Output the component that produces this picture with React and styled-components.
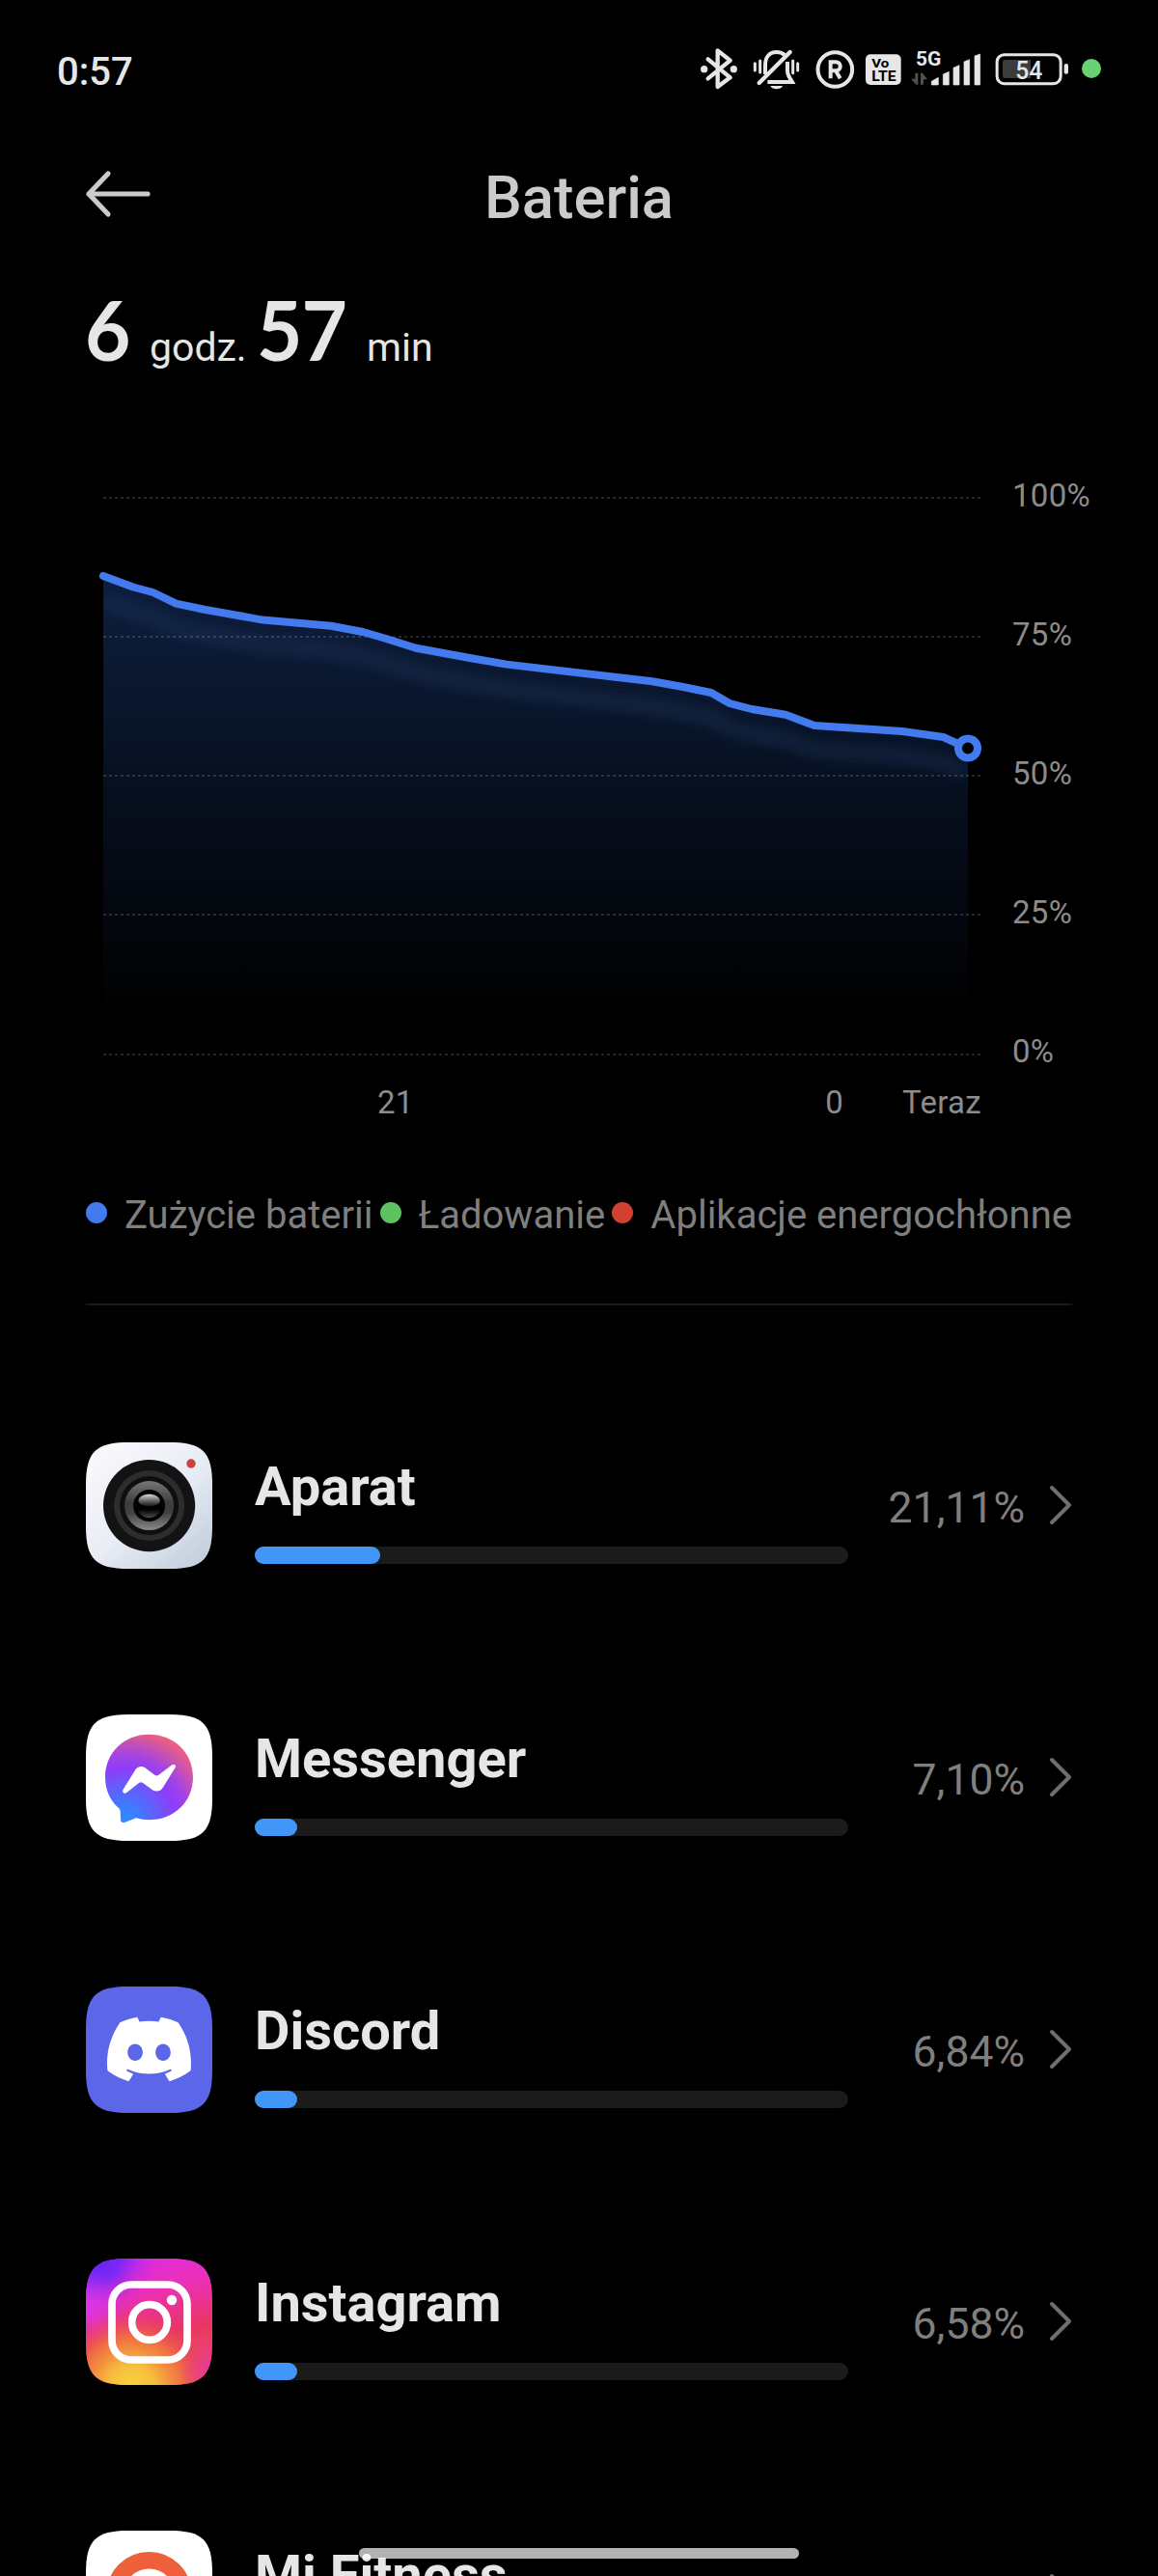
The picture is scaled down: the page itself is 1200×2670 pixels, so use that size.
import React from "react";
import styled, { createGlobalStyle } from "styled-components";
import { SiDiscord } from "react-icons/si";

const GlobalStyle = createGlobalStyle`
  html, body { margin: 0; background: #000; }
  * { box-sizing: border-box; }
`;

const Screen = styled.main`
  position: relative;
  display: flex;
  flex-direction: column;
  width: 1200px;
  height: 2670px;
  overflow: hidden;
  background: #000;
  color: #e6e6e6;
  font-family: Roboto, "Liberation Sans", sans-serif;
`;

const StatusBar = styled.div`
  display: flex;
  flex: none;
  align-items: center;
  justify-content: space-between;
  height: 142px;
  padding: 0 59px 0 59px;
`;

const Clock = styled.span`
  padding-top: 8px;
  font-size: 40px;
  font-weight: 500;
  line-height: 48px;
`;

const StatusIcons = styled.div`
  display: flex;
  align-items: center;
`;

const StatusSvg = styled.svg`
  display: block;
  flex: none;
  width: ${(p) => p.$w}px;
  height: 42px;
  margin-left: ${(p) => p.$gap || 0}px;
  overflow: visible;
  font-family: Roboto, sans-serif;
`;

const MicDot = styled.i`
  width: 20px;
  height: 20px;
  margin-left: 13px;
  border-radius: 50%;
  background: #68d272;
`;

const Header = styled.header`
  display: grid;
  flex: none;
  grid-template-columns: 1fr auto 1fr;
  align-items: center;
  height: 118px;
  padding: 0 88px;
`;

const BackButton = styled.button`
  width: 68px;
  height: 50px;
  padding: 0;
  border: 0;
  background: none;
  svg { display: block; }
`;

const Title = styled.h1`
  margin: 0;
  padding-top: 7px;
  color: #cbcbcb;
  font-size: 61.5px;
  font-weight: 500;
  line-height: 70px;
`;

const Duration = styled.div`
  display: flex;
  flex: none;
  align-items: baseline;
  height: 90px;
  margin: 36px 0 110px;
  padding-left: 88px;
  white-space: nowrap;
`;

const DurationValue = styled.strong`
  width: ${(p) => p.$w}px;
  font-family: Lato, sans-serif;
  font-size: 86px;
  font-weight: 700;
  line-height: 90px;
  letter-spacing: -1px;
  transform: scaleX(0.95);
  transform-origin: left;
`;

const DurationUnit = styled.span`
  width: ${(p) => p.$w}px;
  font-size: 41px;
  line-height: 50px;
`;

const ChartRow = styled.section`
  display: flex;
  flex: none;
  height: 612px;
  padding-left: 90px;
`;

const Plot = styled.svg`
  flex: none;
  width: 930px;
  height: 612px;
`;

const AxisText = styled.span`
  color: #8c8c8c;
  font-size: 33px;
  line-height: 36px;
  letter-spacing: 0.3px;
`;

const YAxis = styled.div`
  display: flex;
  flex-direction: column;
  justify-content: space-between;
  padding-left: 29px;
`;

const XAxis = styled.div`
  display: flex;
  flex: none;
  justify-content: space-between;
  height: 36px;
  margin-top: 17px;
  padding: 0 183px 0 391px;
`;

const HourPair = styled.div`
  display: flex;
  justify-content: space-between;
  width: 483px;
`;

const Legend = styled.div`
  display: flex;
  flex: none;
  justify-content: space-between;
  height: 50px;
  margin: 74px 89px 0;
`;

const LegendItem = styled.div`
  display: flex;
  align-items: center;
  gap: 18px;
  color: #7f7f7f;
  font-size: 40px;
  line-height: 50px;
  white-space: nowrap;
  &::before {
    content: "";
    width: 22px;
    height: 22px;
    margin-top: -6px;
    border-radius: 50%;
    background: ${(p) => p.$color};
  }
`;

const Divider = styled.hr`
  flex: none;
  width: 1022px;
  height: 2px;
  margin: 66px 89px 142px;
  border: 0;
  background: #1b1b1b;
`;

const AppList = styled.ul`
  display: flex;
  flex: none;
  flex-direction: column;
  gap: 151px;
  margin: 0;
  padding: 0 89px;
  list-style: none;
`;

const AppRow = styled.li`
  display: flex;
  align-items: center;
  height: 131px;
`;

const AppTile = styled.svg`
  display: block;
  flex: none;
  width: 131px;
  height: 131px;
`;

const AppInfo = styled.div`
  display: flex;
  flex: none;
  flex-direction: column;
  width: 615px;
  height: 131px;
  margin-left: 44px;
  padding-top: 14px;
`;

const AppName = styled.span`
  font-size: 56px;
  font-weight: 700;
  line-height: 64px;
  white-space: nowrap;
`;

const UsageTrack = styled.div`
  width: 100%;
  height: 18px;
  margin-top: 30px;
  border-radius: 9px;
  background: #1b1b1b;
`;

const UsageFill = styled.div`
  height: 18px;
  min-width: 44px;
  border-radius: 9px;
  background: #4296f8;
`;

const Percent = styled.span`
  flex: 1;
  padding-top: 5px;
  color: #7f7f7f;
  font-size: 44.5px;
  line-height: 52px;
  text-align: right;
`;

const Chevron = styled.svg`
  flex: none;
  width: 24px;
  height: 44px;
  margin-left: 25px;
`;

const HomeIndicator = styled.div`
  position: absolute;
  bottom: 18px;
  left: 372px;
  width: 456px;
  height: 11px;
  border-radius: 6px;
  background: rgba(255, 255, 255, 0.7);
`;

const INK = "#e6e6e6";
const SQUIRCLE = "M0 44C0 10 10 0 44 0H87C121 0 131 10 131 44V87C131 121 121 131 87 131H44C10 131 0 121 0 87Z";

function StatusGlyphs() {
  return (
    <StatusIcons>
      <StatusSvg $w={38} viewBox="78 60 114 126">
        <path d="M101 94L170 151L131 180V67L170 98L101 154" fill="none" stroke={INK} strokeWidth="13" strokeLinejoin="round" strokeLinecap="round" />
        <circle cx="89" cy="125" r="11" fill={INK} />
        <circle cx="181" cy="125" r="11" fill={INK} />
      </StatusSvg>
      <StatusSvg $w={49} $gap={16} viewBox="240 60 147 126">
        <g fill="none" stroke={INK} strokeWidth="12" strokeLinecap="butt">
          <path d="M279 141V113C279 86 293 72 314 72C324 72 333 75 339 81" />
          <path d="M348 102V130C348 146 357 155 363 165H286" />
          <path d="M260 168L356 72" strokeWidth="13" strokeLinecap="round" />
          <path d="M247 107V129M263 99V135M365 99V137M380 107V129" strokeWidth="9" strokeLinecap="round" />
        </g>
        <path d="M295 177H333C328 190 300 190 295 177Z" fill={INK} />
      </StatusSvg>
      <StatusSvg $w={41} $gap={16} viewBox="435 60 123 126">
        <circle cx="496" cy="126" r="53.500" fill="none" stroke={INK} strokeWidth="12" />
        <path d="M482 154V103H498C517 103 517 130 498 130H482M498 130L512 154" fill="none" stroke={INK} strokeWidth="12" />
      </StatusSvg>
      <StatusSvg $w={37} $gap={11} viewBox="591 60 111 126">
        <rect x="591" y="79" width="110" height="95" rx="15" fill={INK} />
        <text x="610" y="121" fontSize="40" fontWeight="700" textLength="54" lengthAdjust="spacingAndGlyphs">Vo</text>
        <text x="610" y="162" fontSize="43" fontWeight="700" textLength="76" lengthAdjust="spacingAndGlyphs">LTE</text>
      </StatusSvg>
      <StatusSvg $w={73} $gap={10} viewBox="732 60 219 126">
        <text x="747" y="115" fontSize="60" fontWeight="700" fill={INK} textLength="79" lengthAdjust="spacingAndGlyphs">5G</text>
        <path d="M745 137H754V173H748L732 155H745ZM762 137H768L783 157H771V173H762Z" fill="#505050" />
        <g fill={INK} stroke={INK} strokeWidth="2" strokeLinejoin="round">
          <path d="M796 163L817 151V174H796Z" />
          <path d="M832 141L850 133V174H832Z" />
          <path d="M864 121L882 113V174H864Z" />
          <path d="M897 102L914 95V174H897Z" />
          <path d="M930 84L947 78V174H930Z" />
        </g>
      </StatusSvg>
      <StatusSvg $w={77} $gap={14} viewBox="993 60 231 126">
        <rect x="999.500" y="80" width="198" height="90" rx="22" fill="none" stroke={INK} strokeWidth="9" />
        <path d="M1104 96V153H1027Q1017 153 1017 143V106Q1017 96 1027 96Z" fill="#3c3c3c" />
        <rect x="1208" y="108" width="13" height="32" rx="6" fill={INK} />
        <text x="1057" y="156" fontSize="75" fontWeight="500" fill={INK} textLength="84" lengthAdjust="spacingAndGlyphs">54</text>
      </StatusSvg>
      <MicDot />
    </StatusIcons>
  );
}

const levels = [
  [107, 597], [138, 608.5], [158.5, 614], [182.5, 625.7], [213, 632], [272.5, 642.6],
  [343, 648.7], [376, 655], [397, 661], [431, 671.7], [492.5, 683], [525, 688.6],
  [676, 706.3], [708, 712], [737, 718], [756, 729], [779, 735], [814, 740.7],
  [844, 751.9], [935, 758], [977.5, 764], [1003, 775.5],
];
const linePath = "M" + levels.map((p) => p.join(" ")).join("L");
const areaPath = linePath + "V1092H107Z";

function BatteryPlot() {
  return (
    <Plot viewBox="90 496 930 612">
      <defs>
        <linearGradient id="area" gradientUnits="userSpaceOnUse" x1="0" y1="597" x2="0" y2="1092">
          <stop offset="0" stopColor="#0e1e3e" />
          <stop offset="0.3" stopColor="#09152a" />
          <stop offset="0.45" stopColor="#070f1f" />
          <stop offset="0.7" stopColor="#03070e" />
          <stop offset="0.9" stopColor="#010102" />
          <stop offset="1" stopColor="#000" />
        </linearGradient>
        <clipPath id="areaClip"><path d={areaPath} /></clipPath>
        <filter id="soft" filterUnits="userSpaceOnUse" x="60" y="560" width="1000" height="300">
          <feGaussianBlur stdDeviation="7" />
        </filter>
      </defs>
      <path d={areaPath} fill="url(#area)" />
      <g clipPath="url(#areaClip)">
        <path d={linePath} transform="translate(0 26)" fill="none" stroke="#20406c" strokeOpacity="0.4" strokeWidth="12" filter="url(#soft)" />
      </g>
      {[516, 660, 804, 948, 1093].map((y) => (
        <path key={y} d={`M107 ${y}H1016`} stroke="#fff" strokeOpacity="0.2" strokeWidth="1.7" strokeDasharray="3 3" />
      ))}
      <path d={linePath} fill="none" stroke="#437bee" strokeWidth="8" strokeLinejoin="round" strokeLinecap="round" />
      <circle cx="1003" cy="775.5" r="10" fill="#000" stroke="#437bee" strokeWidth="8" />
    </Plot>
  );
}

function CameraTile() {
  return (
    <AppTile viewBox="0 0 131 131">
      <defs>
        <linearGradient id="camBg" x1="0.1" y1="0" x2="1" y2="1">
          <stop offset="0" stopColor="#fafafd" />
          <stop offset="0.5" stopColor="#e8ecf4" />
          <stop offset="1" stopColor="#bccada" />
        </linearGradient>
        <linearGradient id="camRing" x1="0" y1="0" x2="0" y2="1">
          <stop offset="0" stopColor="#767676" />
          <stop offset="0.45" stopColor="#3c3c3c" />
          <stop offset="0.65" stopColor="#424242" />
          <stop offset="1" stopColor="#8a8a8a" />
        </linearGradient>
        <linearGradient id="camGlass" x1="0" y1="0" x2="0" y2="1">
          <stop offset="0" stopColor="#d8d8d8" />
          <stop offset="0.6" stopColor="#5a5a5a" />
          <stop offset="1" stopColor="#181818" />
        </linearGradient>
        <linearGradient id="camLow" x1="0" y1="0" x2="0" y2="1">
          <stop offset="0.65" stopColor="#000" />
          <stop offset="1" stopColor="#4a4a4a" />
        </linearGradient>
      </defs>
      <path d={SQUIRCLE} fill="url(#camBg)" />
      <circle cx="65.6" cy="65.6" r="47.6" fill="#131313" />
      <circle cx="65.6" cy="65.6" r="36.5" fill="#2d2d2d" />
      <circle cx="65.6" cy="65.6" r="30.5" fill="#0f0f0f" />
      <circle cx="65.6" cy="65.6" r="25.5" fill="url(#camRing)" />
      <circle cx="65.6" cy="65.6" r="16.5" fill="#020202" />
      <circle cx="65.6" cy="65.6" r="12.6" fill="url(#camLow)" />
      <path d="M54.4 60.5C55 51.500 76 51.500 76.800 60.500C76.500 68 54.700 68 54.400 60.500Z" fill="url(#camGlass)" />
      <circle cx="109" cy="22" r="4.700" fill="#c9443e" />
    </AppTile>
  );
}

function MessengerTile() {
  return (
    <AppTile viewBox="57 51 393 393">
      <defs>
        <radialGradient id="msg" gradientUnits="userSpaceOnUse" cx="172" cy="382" r="300">
          <stop offset="0" stopColor="#2f8dff" />
          <stop offset="0.18" stopColor="#4079ff" />
          <stop offset="0.55" stopColor="#8f3df8" />
          <stop offset="0.68" stopColor="#a244e4" />
          <stop offset="1" stopColor="#f8646f" />
        </radialGradient>
      </defs>
      <path d={SQUIRCLE} transform="translate(57 51) scale(3)" fill="#fff" />
      <path d="M253 113C331 113 390 170 390 246C390 323 331 379 253 379C239 379 226 377 213 373L179 386C171 389 165 386 165 379L164 351C163 347 161 343 158 341C132 318 117 285 117 246C117 170 176 113 253 113Z" fill="url(#msg)" />
      <path d="M173 284L210 224C217 213 231 210 241 217L272 240C275 242 279 242 282 240L325 208C332 203 339 210 335 216L296 279C290 290 275 293 264 286L233 263C230 261 226 261 223 263L183 295C176 299 168 292 173 284Z" fill="#fff" />
    </AppTile>
  );
}

function DiscordTile() {
  return (
    <AppTile viewBox="0 0 131 131">
      <path d={SQUIRCLE} fill="#5b66e9" />
      <SiDiscord x="22" y="21.500" size={87} color="#fff" />
    </AppTile>
  );
}

function InstagramTile() {
  return (
    <AppTile viewBox="57 63 393 393">
      <defs>
        <linearGradient id="igBase" x1="0.4" y1="0" x2="0.6" y2="1">
          <stop offset="0" stopColor="#e02bdc" />
          <stop offset="0.25" stopColor="#ea30b8" />
          <stop offset="0.6" stopColor="#e93565" />
          <stop offset="1" stopColor="#ec5a50" />
        </linearGradient>
        <radialGradient id="igViolet" cx="0.02" cy="0" r="0.62" gradientTransform="rotate(-25 0 0) scale(1 0.82)">
          <stop offset="0" stopColor="#5a25f5" />
          <stop offset="0.45" stopColor="#7d28f5" />
          <stop offset="1" stopColor="#d62de6" stopOpacity="0" />
        </radialGradient>
        <radialGradient id="igPink" cx="0" cy="0.38" r="0.3">
          <stop offset="0" stopColor="#dc35ec" />
          <stop offset="1" stopColor="#dc35e0" stopOpacity="0" />
        </radialGradient>
        <radialGradient id="igGold" cx="0.36" cy="1.02" r="0.62">
          <stop offset="0" stopColor="#fad33f" />
          <stop offset="0.3" stopColor="#f6bd3d" />
          <stop offset="0.65" stopColor="#f27a3a" stopOpacity="0.8" />
          <stop offset="1" stopColor="#ea3a5c" stopOpacity="0" />
        </radialGradient>
        <radialGradient id="igRight" cx="1.05" cy="0.9" r="0.32">
          <stop offset="0" stopColor="#e32fc0" />
          <stop offset="1" stopColor="#e62f90" stopOpacity="0" />
        </radialGradient>
      </defs>
      {["igBase", "igViolet", "igPink", "igGold", "igRight"].map((id) => (
        <path key={id} d={SQUIRCLE} transform="translate(57 63) scale(3)" fill={`url(#${id})`} />
      ))}
      <rect x="138" y="144" width="234" height="234" rx="60" fill="none" stroke="#fff" strokeWidth="23" />
      <circle cx="255" cy="261" r="55" fill="none" stroke="#fff" strokeWidth="23" />
      <circle cx="324" cy="192" r="15.500" fill="#fff" />
    </AppTile>
  );
}

function FitnessTile() {
  return (
    <AppTile viewBox="0 0 131 131">
      <path d={SQUIRCLE} fill="#fff" />
      <circle cx="65.500" cy="66" r="35.300" fill="none" stroke="#ee603a" strokeWidth="17.500" />
    </AppTile>
  );
}

const apps = [
  { name: "Aparat", percent: "21,11%", usage: 21.11, Tile: CameraTile },
  { name: "Messenger", percent: "7,10%", usage: 7.1, Tile: MessengerTile },
  { name: "Discord", percent: "6,84%", usage: 6.84, Tile: DiscordTile },
  { name: "Instagram", percent: "6,58%", usage: 6.58, Tile: InstagramTile },
  { name: "Mi Fitness", percent: "", usage: 0, Tile: FitnessTile },
];

export default function App() {
  return (
    <Screen>
      <GlobalStyle />
      <StatusBar>
        <Clock>0:57</Clock>
        <StatusGlyphs />
      </StatusBar>
      <Header>
        <BackButton aria-label="Wstecz">
          <svg width="68" height="50" viewBox="0 0 68 50">
            <path d="M24 4L4 25L24 46M4 25H65" fill="none" stroke="#cbcbcb" strokeWidth="5.200" strokeLinecap="round" strokeLinejoin="round" />
          </svg>
        </BackButton>
        <Title>Bateria</Title>
      </Header>
      <Duration>
        <DurationValue $w={67}>6</DurationValue>
        <DurationUnit $w={111}>godz.</DurationUnit>
        <DurationValue $w={114}>57</DurationValue>
        <DurationUnit>min</DurationUnit>
      </Duration>
      <ChartRow>
        <BatteryPlot />
        <YAxis>
          {["100%", "75%", "50%", "25%", "0%"].map((t) => <AxisText key={t}>{t}</AxisText>)}
        </YAxis>
      </ChartRow>
      <XAxis>
        <HourPair>
          <AxisText>21</AxisText>
          <AxisText>0</AxisText>
        </HourPair>
        <AxisText>Teraz</AxisText>
      </XAxis>
      <Legend>
        <LegendItem $color="#437bee">Zużycie baterii</LegendItem>
        <LegendItem $color="#5ec262">Ładowanie</LegendItem>
        <LegendItem $color="#d14131">Aplikacje energochłonne</LegendItem>
      </Legend>
      <Divider />
      <AppList>
        {apps.map(({ name, percent, usage, Tile }) => (
          <AppRow key={name}>
            <Tile />
            <AppInfo>
              <AppName>{name}</AppName>
              <UsageTrack>
                <UsageFill style={{ width: `${usage}%` }} />
              </UsageTrack>
            </AppInfo>
            <Percent>{percent}</Percent>
            <Chevron viewBox="0 0 24 44">
              <path d="M3 3L21 21L3 39" fill="none" stroke="#6e6e6e" strokeWidth="4" strokeLinecap="round" strokeLinejoin="round" />
            </Chevron>
          </AppRow>
        ))}
      </AppList>
      <HomeIndicator />
    </Screen>
  );
}
